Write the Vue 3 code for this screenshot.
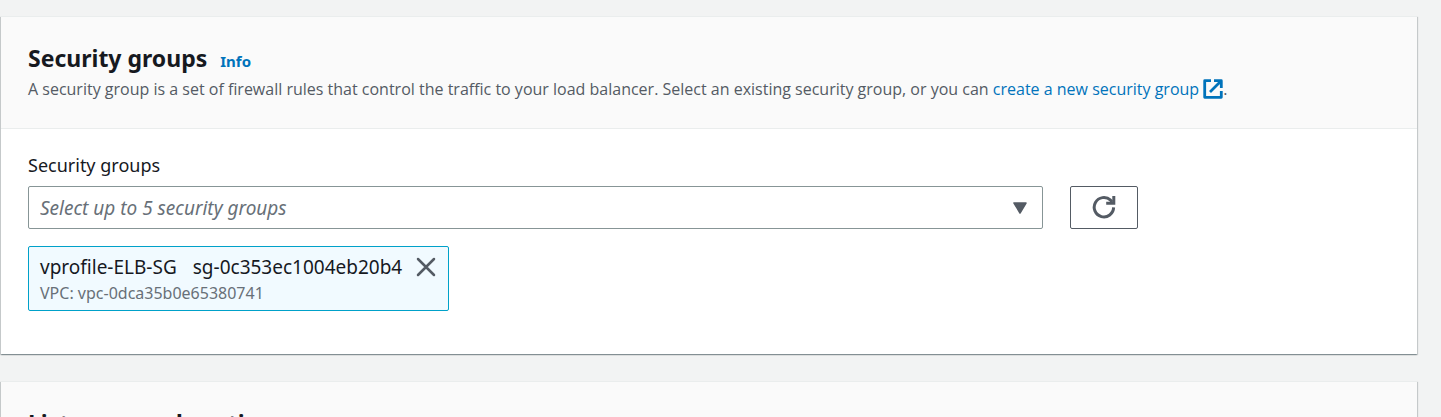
<script setup>
import { ref } from 'vue'

const choice = ref('')
const selected = ref([
  { name: 'vprofile-ELB-SG', id: 'sg-0c353ec1004eb20b4', vpc: 'vpc-0dca35b0e65380741' },
])

function remove(id) {
  selected.value = selected.value.filter((group) => group.id !== id)
}
</script>

<template>
  <main class="page">
    <section class="card">
      <header class="card-header">
        <div class="title-row">
          <h2>Security groups</h2>
          <a class="info" href="#info">Info</a>
        </div>
        <p class="description">
          A security group is a set of firewall rules that control the traffic to your load balancer. Select an existing security group, or you can
          <a href="#create">create a new security group
            <svg class="external" viewBox="0 0 20 20" aria-hidden="true">
              <path d="M8 1.7H1.7v16.6h16.6V12" />
              <path d="M11 1.7h7.3V9M18 2 7 13" />
            </svg></a>.
        </p>
      </header>
      <div class="card-body">
        <label class="field-label" for="groups">Security groups</label>
        <div class="field-row">
          <div class="select-box">
            <select id="groups" v-model="choice">
              <option value="">Select up to 5 security groups</option>
            </select>
            <svg class="caret" viewBox="0 0 14 12" aria-hidden="true">
              <path d="M1 1h12L7 11z" />
            </svg>
          </div>
          <button class="refresh" type="button" aria-label="Refresh security groups">
            <svg viewBox="0 0 24 24" aria-hidden="true">
              <path d="M21.6 12.4a9.7 9.7 0 1 1-3-7.2l1.6 1.8" />
              <path d="M21.8 1v7.2h-7.6" />
            </svg>
          </button>
        </div>
        <ul class="tokens">
          <li v-for="group in selected" :key="group.id" class="token">
            <div>
              <div class="token-title"><span>{{ group.name }}</span><span>{{ group.id }}</span></div>
              <div class="token-vpc">VPC: {{ group.vpc }}</div>
            </div>
            <button class="dismiss" type="button" :aria-label="`Remove ${group.name}`" @click="remove(group.id)">
              <svg viewBox="0 0 20 20" aria-hidden="true"><path d="m2 2 16 16M18 2 2 18" /></svg>
            </button>
          </li>
        </ul>
      </div>
    </section>

    <section class="card">
      <header class="card-header">
        <div class="title-row"><h2>Listeners and routing</h2></div>
      </header>
    </section>
  </main>
</template>

<style>
html {
  background: #f2f3f3;
}
body {
  margin: 0;
  height: 100vh;
  overflow: hidden;
}
</style>

<style scoped>
.page {
  display: flex;
  flex-direction: column;
  gap: 27px;
  padding: 16px 24px 0 1px;
  color: #16191f;
  font-family: "Noto Sans", "Open Sans", sans-serif;
}
.card {
  background: #fff;
  border-top: 1px solid #eaeded;
  box-shadow: 0 1px 1px 0 rgba(0, 28, 36, 0.25), 1px 1px 1px 0 rgba(0, 28, 36, 0.15), -1px 1px 1px 0 rgba(0, 28, 36, 0.15);
}
.card-header {
  padding: 24px 27px 26px;
  background: #fafafa;
  border-bottom: 1px solid #eaeded;
}
.title-row {
  display: flex;
  align-items: baseline;
  gap: 13px;
}
h2 {
  margin: 0;
  font-size: 23px;
  line-height: 35px;
  font-weight: 700;
}
a {
  color: #0073bb;
  text-decoration: none;
}
.info {
  font-size: 15px;
  font-weight: 700;
}
.description {
  margin: 0;
  color: #545b64;
  font-family: "Open Sans", "Noto Sans", sans-serif;
  font-size: 16px;
  line-height: 26px;
}
.external {
  width: 20px;
  height: 20px;
  vertical-align: -4px;
  fill: none;
  stroke: currentColor;
  stroke-width: 2.8;
  stroke-linejoin: round;
}
.card-body {
  padding: 23px 27px 43px;
}
.field-label {
  display: block;
  margin-bottom: 8px;
  font-size: 18px;
  line-height: 26px;
}
.field-row {
  display: grid;
  grid-template-columns: repeat(12, 1fr);
  column-gap: 27px;
}
.select-box {
  grid-column: span 9;
  display: grid;
  align-items: center;
}
select {
  grid-area: 1 / 1;
  width: 100%;
  height: 43px;
  padding: 0 40px 0 11px;
  appearance: none;
  background: #fff;
  border: 1px solid #879596;
  border-radius: 2px;
  color: #687078;
  font: italic 19px/26px "Noto Sans", "Open Sans", sans-serif;
}
.caret {
  grid-area: 1 / 1;
  justify-self: end;
  width: 14px;
  height: 12px;
  margin-right: 16px;
  pointer-events: none;
  fill: #545b64;
  stroke: #545b64;
  stroke-width: 1.5;
  stroke-linejoin: round;
}
button {
  display: flex;
  align-items: center;
  justify-content: center;
  cursor: pointer;
}
.refresh {
  width: 68px;
  height: 43px;
  padding: 0 0 2px;
  background: #fff;
  border: 1px solid #545b64;
  border-radius: 2px;
}
.refresh svg {
  width: 24px;
  height: 24px;
  fill: none;
  stroke: #545b64;
  stroke-width: 3;
}
.tokens {
  display: flex;
  gap: 9px;
  margin: 17px 0 0;
  padding: 0;
  list-style: none;
}
.token {
  display: flex;
  align-items: flex-start;
  gap: 14px;
  padding: 7px 12px 5px 11px;
  background: #f1faff;
  border: 1px solid #00a1c9;
  border-radius: 2px;
}
.token-title {
  display: flex;
  gap: 16px;
  font-size: 19px;
  line-height: 27px;
}
.token-vpc {
  color: #687078;
  font-size: 16px;
  line-height: 24px;
}
.dismiss {
  height: 26px;
  padding: 0;
  background: none;
  border: 0;
}
.dismiss svg {
  width: 20px;
  height: 20px;
  fill: none;
  stroke: #545b64;
  stroke-width: 2.5;
  stroke-linecap: round;
}
</style>
